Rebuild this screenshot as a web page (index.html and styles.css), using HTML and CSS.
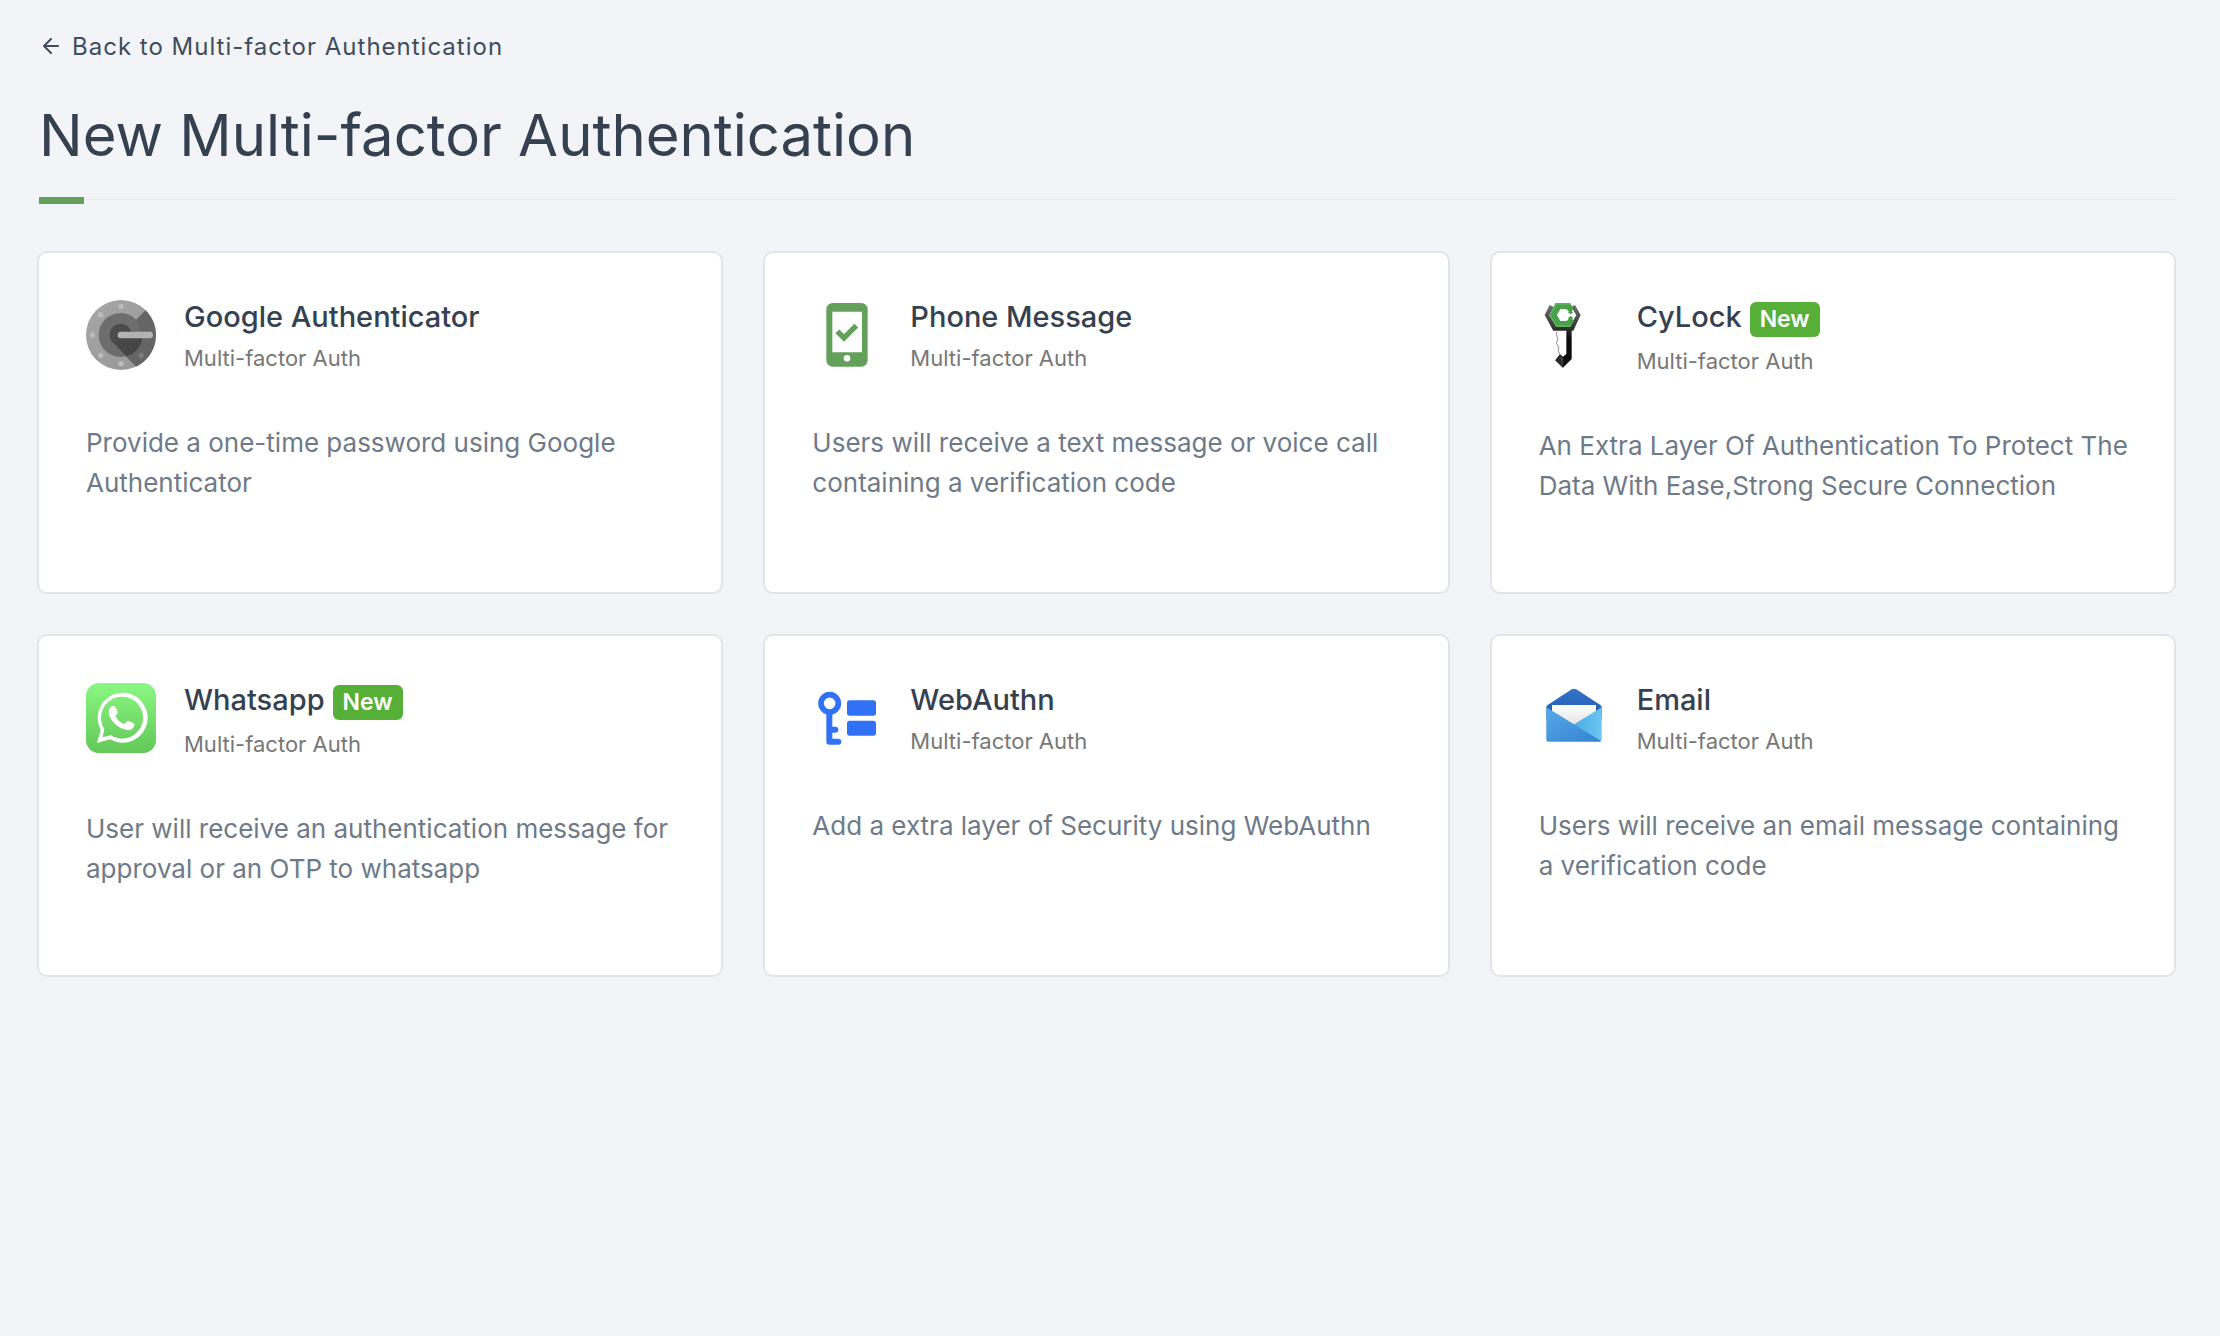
FILE: index.html
```html
<!DOCTYPE html>
<html lang="en">
<head>
<meta charset="utf-8">
<meta name="viewport" content="width=device-width, initial-scale=1">
<title>New Multi-factor Authentication</title>
<link rel="stylesheet" href="styles.css">
</head>
<body>
<main class="page">
  <a class="back" href="#">
    <svg class="back-icon" viewBox="0 0 16 18" aria-hidden="true"><path d="M15 8H1M8 1L1 8l7 7"/></svg>
    <span>Back to Multi-factor Authentication</span>
  </a>
  <header class="page-header">
    <h1 class="page-title">New Multi-factor Authentication</h1>
  </header>
  <section class="cards">
    <a class="card" href="#">
      <div class="card-head">
        <svg class="card-icon" viewBox="48 45 210 210" aria-hidden="true">
          <defs>
            <linearGradient id="dial" x1="0" y1="0" x2="1" y2="1"><stop offset="0" stop-color="#a6a6a6"/><stop offset="1" stop-color="#979797"/></linearGradient>
            <linearGradient id="core" x1="0" y1="0" x2="1" y2="1"><stop offset="0" stop-color="#4f4f4f"/><stop offset="1" stop-color="#404040"/></linearGradient>
            <clipPath id="ring"><circle cx="152" cy="150" r="66"/></clipPath>
          </defs>
          <circle cx="153" cy="150" r="105" fill="url(#dial)"/>
          <path d="M227 76A105 105 0 0 1 198 245L132 178L152 150z" fill="#656565"/>
          <path d="M152 84A66 66 0 1 0 218 150L198 104A66 66 0 0 0 152 84z" fill="#6d6d6d"/>
          <g clip-path="url(#ring)"><path d="M129 173A33 33 0 1 1 184 142H220V170L180 225z" fill="url(#core)"/></g>
          <g fill="#bcbcbc"><circle cx="153" cy="64" r="8"/><circle cx="92" cy="89" r="8"/><circle cx="67" cy="150" r="8"/><circle cx="92" cy="211" r="8"/><circle cx="153" cy="236" r="8"/></g>
          <circle cx="213" cy="211" r="8" fill="#7b7b7b"/>
          <rect x="143" y="140" width="106" height="20" rx="10" fill="#b3b3b3"/>
        </svg>
        <div class="card-text">
          <h2 class="card-title">Google Authenticator</h2>
          <p class="card-type">Multi-factor Auth</p>
        </div>
      </div>
      <p class="card-desc">Provide a one-time password using Google Authenticator</p>
    </a>
    <a class="card" href="#">
      <div class="card-head">
        <svg class="card-icon" viewBox="36 45 210 210" aria-hidden="true">
          <path fill-rule="evenodd" fill="#63a15b" d="M98 54h86a19 19 0 0 1 19 19v153a19 19 0 0 1-19 19H98a19 19 0 0 1-19-19V73a19 19 0 0 1 19-19zM97 80v122h89V80zM141 210a10 10 0 1 0 0 20 10 10 0 0 0 0-20z"/>
          <path d="M112 139l20 20 37-37" fill="none" stroke="#63a15b" stroke-width="16"/>
        </svg>
        <div class="card-text">
          <h2 class="card-title">Phone Message</h2>
          <p class="card-type">Multi-factor Auth</p>
        </div>
      </div>
      <p class="card-desc">Users will receive a text message or voice call containing a verification code</p>
    </a>
    <a class="card" href="#">
      <div class="card-head">
        <svg class="card-icon" viewBox="54 45 210 210" aria-hidden="true">
          <defs>
            <linearGradient id="shaft" x1="0" y1="0" x2="0" y2="1"><stop offset="0" stop-color="#707070"/><stop offset=".35" stop-color="#353535"/><stop offset=".55" stop-color="#0b0b0b"/><stop offset="1" stop-color="#111"/></linearGradient>
          </defs>
          <path fill="url(#shaft)" d="M86 60L71 90L97 137H136V207L126 215L117 208L103 226L126 248L152 222V137H157L179 90L162 60L151 66L166 91L146 124H105L85 91L98 66z"/>
          <path fill="#2c2c2c" d="M117 208L103 226L126 248z"/><path fill="#444" d="M117 212L126 220V248z"/>
          <path fill="#48a24a" d="M104 54H147L157 71L148 84L136 72H118L108 90L118 108H137L148 96L159 108L148 126H106L85 90z"/>
          <path fill="#5db45d" d="M104 54H147L150 59H107L90 90L106 121H151L148 126H106L85 90z"/>
          <path fill="#48a24a" d="M141 82L148 76L157 82L149 88zM141 98L149 93L157 99L148 106z"/>
          <path d="M108 141q-4 8 0 14q6 6 0 13q-4 7 2 13q6 7 2 12q-1 7 4 14" fill="none" stroke="#888" stroke-width="3"/>
        </svg>
        <div class="card-text">
          <h2 class="card-title">CyLock <span class="badge">New</span></h2>
          <p class="card-type">Multi-factor Auth</p>
        </div>
      </div>
      <p class="card-desc">An Extra Layer Of Authentication To Protect The Data With Ease,Strong Secure Connection</p>
    </a>
    <a class="card" href="#">
      <div class="card-head">
        <svg class="card-icon" viewBox="48 52 210 210" aria-hidden="true">
          <defs><linearGradient id="leaf" x1="0" y1="0" x2="0" y2="1"><stop offset="0" stop-color="#8bf783"/><stop offset="1" stop-color="#62c857"/></linearGradient></defs>
          <rect x="48" y="52" width="210" height="210" rx="38" fill="url(#leaf)"/>
          <path fill-rule="evenodd" fill="#fff" d="M81 232L92 192A75 75 0 1 1 120 221zM98 215L122 209A63 63 0 1 0 103 190z"/>
          <path fill="#fff" d="M127 121C132 120 136 122 138 128L143 140C144 144 138 148 136 152C143 164 151 171 163 175C167 173 170 165 175 165L191 173C196 176 192 185 187 189C177 196 164 192 152 187C137 179 127 168 120 155C114 143 115 126 127 121z"/>
        </svg>
        <div class="card-text">
          <h2 class="card-title">Whatsapp <span class="badge">New</span></h2>
          <p class="card-type">Multi-factor Auth</p>
        </div>
      </div>
      <p class="card-desc">User will receive an authentication message for approval or an OTP to whatsapp</p>
    </a>
    <a class="card" href="#">
      <div class="card-head">
        <svg class="card-icon" viewBox="36 52 210 210" aria-hidden="true">
          <circle cx="89" cy="113" r="26" fill="none" stroke="#3071f6" stroke-width="17"/>
          <path d="M88 142V228H115M88 192H106" fill="none" stroke="#3071f6" stroke-width="18" stroke-linecap="round" stroke-linejoin="round"/>
          <g fill="#3071f6"><rect x="141" y="104" width="87" height="46" rx="8"/><rect x="141" y="165" width="87" height="45" rx="8"/></g>
        </svg>
        <div class="card-text">
          <h2 class="card-title">WebAuthn</h2>
          <p class="card-type">Multi-factor Auth</p>
        </div>
      </div>
      <p class="card-desc">Add a extra layer of Security using WebAuthn</p>
    </a>
    <a class="card" href="#">
      <div class="card-head">
        <svg class="card-icon" viewBox="54 52 210 210" aria-hidden="true">
          <defs>
            <linearGradient id="flap" x1="0" y1="0" x2="0" y2="1"><stop offset="0" stop-color="#3474cb"/><stop offset="1" stop-color="#2058ab"/></linearGradient>
            <linearGradient id="front" x1="0" y1="0" x2="1" y2="1"><stop offset="0" stop-color="#55aae8"/><stop offset="1" stop-color="#3680d1"/></linearGradient>
            <linearGradient id="side" x1="0" y1="0" x2="1" y2="0"><stop offset="0" stop-color="#4ba6e2"/><stop offset="1" stop-color="#6bc7f2"/></linearGradient>
            <linearGradient id="paper" x1="0" y1="0" x2="0" y2="1"><stop offset="0" stop-color="#fff"/><stop offset="1" stop-color="#e2e2e2"/></linearGradient>
          </defs>
          <path fill="url(#flap)" d="M76 125Q76 121 80 118L152 71Q159 67 166 71L238 118Q242 121 242 125V160H76z"/>
          <path fill="url(#paper)" d="M93 118H225V180H93z"/>
          <path fill="url(#side)" d="M242 125V222Q242 228 236 228L150 190L160 176z"/>
          <path fill="url(#front)" d="M76 125L240 226Q238 228 235 228H82Q76 228 76 222z"/>
        </svg>
        <div class="card-text">
          <h2 class="card-title">Email</h2>
          <p class="card-type">Multi-factor Auth</p>
        </div>
      </div>
      <p class="card-desc">Users will receive an email message containing a verification code</p>
    </a>
  </section>
</main>
</body>
</html>
```
FILE: styles.css
```css
* {
  box-sizing: border-box;
}

body {
  margin: 0;
  background: #f2f4f8;
  color: #364150;
  font-family: Inter, "Liberation Sans", sans-serif;
}

.page {
  padding: 32px 44px 40px 37px;
}

.back {
  display: inline-flex;
  align-items: center;
  gap: 13px;
  padding-left: 6px;
  color: #414d5c;
  font-size: 24px;
  line-height: 30px;
  letter-spacing: 1px;
  text-decoration: none;
}

.back-icon {
  width: 16px;
  height: 18px;
  fill: none;
  stroke: currentColor;
  stroke-width: 2;
  stroke-linecap: round;
  stroke-linejoin: round;
}

.page-header {
  margin: 36px 0 51px 2px;
  border-bottom: 1px solid #e7e9ed;
}

.page-header::after {
  content: "";
  display: block;
  width: 45px;
  height: 7px;
  margin-bottom: -5px;
  background: #63a15b;
}

.page-title {
  margin: 0 0 25px;
  font-size: 58px;
  font-weight: 400;
  line-height: 74px;
}

.cards {
  display: grid;
  grid-template-columns: repeat(3, 1fr);
  gap: 40px;
}

.card {
  min-height: 343px;
  padding: 47px;
  border: 2px solid #e3e4e6;
  border-radius: 10px;
  background: #fff;
  color: inherit;
  text-decoration: none;
}

.card:nth-child(3n) {
  padding-right: 44px;
}

.card-head {
  display: flex;
  gap: 28px;
}

.card-icon {
  flex: none;
  width: 70px;
  height: 70px;
}

.card-title {
  display: flex;
  align-items: baseline;
  gap: 8px;
  margin: 0 0 8px;
  font-size: 29px;
  font-weight: 500;
  line-height: 34px;
}

.badge {
  padding: 3px 10px;
  border-radius: 6px;
  background: #56b038;
  color: #fff;
  font-size: 23px;
  font-weight: 600;
  line-height: 29px;
}

.card-type {
  margin: 0;
  color: #777;
  font-size: 22px;
  line-height: 32px;
}

.card-desc {
  margin: 49px 0 0;
  color: #6e7a88;
  font-size: 26px;
  line-height: 40px;
}
```
